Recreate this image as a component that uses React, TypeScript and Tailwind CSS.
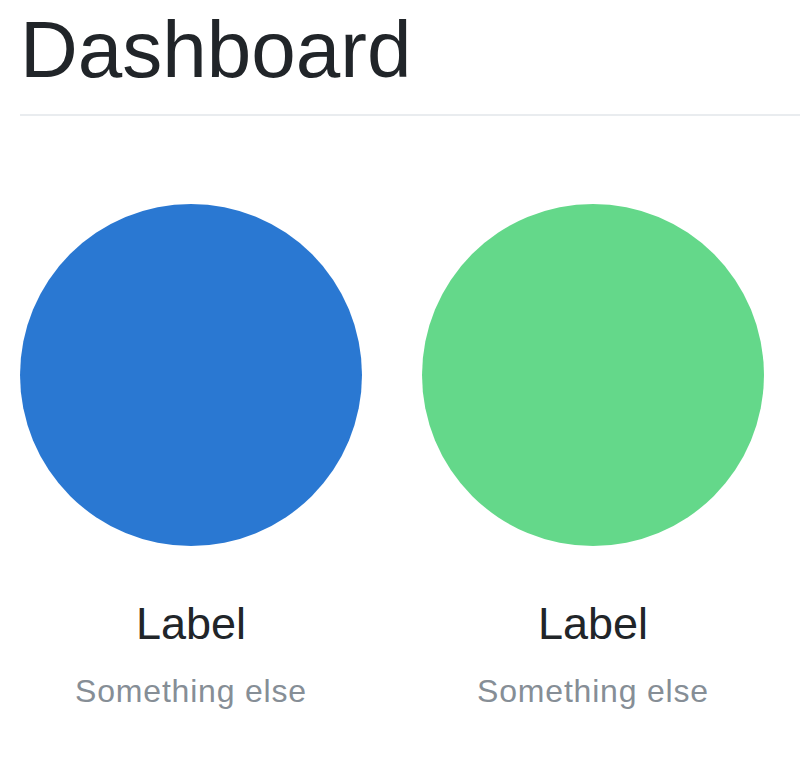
export default function App() {
  const items = [
    { color: "bg-[#2a78d2]", label: "Label", sub: "Something else" },
    { color: "bg-[#64d88a]", label: "Label", sub: "Something else" },
  ];

  return (
    <div className="min-h-[758px] bg-white pl-5 pt-[2px] font-['Liberation_Sans',Arial,sans-serif] text-[#212529]">
      {/* Header */}
      <h1 className="border-b-2 border-[#e9ecef] pb-4 text-[80px] font-normal leading-[96px]">
        Dashboard
      </h1>

      {/* Placeholders */}
      <div className="mt-[88px] flex gap-[60px]">
        {items.map((it, i) => (
          <div key={i} className="flex w-[342px] flex-col items-center text-center">
            <div className={`h-[342px] w-[342px] rounded-full ${it.color}`} />
            <h4 className="mt-[51px] mb-4 text-[45px] font-normal leading-[54px]">
              {it.label}
            </h4>
            <span className="text-[32px] leading-[48px] tracking-[0.8px] text-[#868e96]">
              {it.sub}
            </span>
          </div>
        ))}
      </div>
    </div>
  );
}
